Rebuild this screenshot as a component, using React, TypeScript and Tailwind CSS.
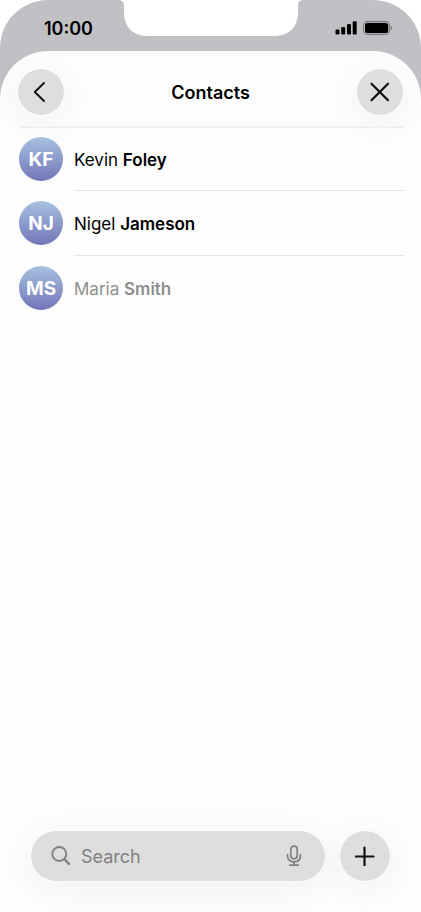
interface Contact {
  first: string;
  last: string;
  muted?: boolean;
}

const contacts: Contact[] = [
  { first: "Kevin", last: "Foley" },
  { first: "Nigel", last: "Jameson" },
  { first: "Maria", last: "Smith", muted: true },
];

const roundButton =
  "flex shrink-0 items-center justify-center rounded-full bg-[#dedede] text-[#111] ring-1 ring-white/70 shadow-[0_6px_36px_rgba(0,0,0,0.06)]";

function StatusBar() {
  return (
    <div className="grid h-[51px] grid-cols-[1fr_auto_1fr] text-black">
      <time className="pt-[17px] pl-[44px] text-[18px] leading-[24px] font-semibold">10:00</time>
      <svg width="186" height="36" viewBox="0 0 186 36" aria-hidden="true">
        <path
          d="M0 0H186C181.500 0 180 2 180 6V12C180 27 171 36 156 36H30C15 36 6 27 6 12V6C6 2 4.500 0 0 0Z"
          fill="#fff"
        />
      </svg>
      <div className="flex items-start justify-end gap-[6px] pt-[21px] pr-[28px]">
        <svg width="22" height="14" viewBox="0 0 22 14" aria-hidden="true">
          <rect x="0.500" y="8.500" width="4" height="5" rx="1.200" />
          <rect x="6.200" y="6" width="4" height="7.500" rx="1.200" />
          <rect x="12" y="3" width="4" height="10.500" rx="1.200" />
          <rect x="17.700" y="0.200" width="4" height="13.300" rx="1.200" />
        </svg>
        <svg width="30" height="14" viewBox="0 0 30 14" aria-hidden="true">
          <rect x="0.600" y="0.600" width="26" height="12.800" rx="4" fill="none" stroke="#77777b" strokeWidth="1.100" />
          <rect x="2" y="2" width="23.200" height="10" rx="2.600" />
          <path d="M28 4.800C29.800 5.500 29.800 8.500 28 9.200Z" fill="#77777b" />
        </svg>
      </div>
    </div>
  );
}

function ContactRow({ contact }: { contact: Contact }) {
  const { first, last, muted } = contact;
  return (
    <li className="group flex h-[65px] items-center gap-[11px] pb-[1px] first:h-[63px]">
      <span className="flex size-[44px] shrink-0 items-center justify-center rounded-full bg-linear-to-b from-[#a7c1df] to-[#7376b7] pt-[2px] text-[19px] leading-[24px] font-bold text-white">
        {first[0]}
        {last[0]}
      </span>
      <a
        href="#"
        className={`-mb-[1px] flex flex-1 items-center self-stretch border-b border-[#e6e6e6] pt-[1px] text-[17px] leading-[24px] group-last:border-transparent ${
          muted ? "text-[#8e8e8e]" : "text-black"
        }`}
      >
        <span>
          {first} <span className="font-semibold">{last}</span>
        </span>
      </a>
    </li>
  );
}

export default function App() {
  return (
    <div className="flex min-h-screen flex-col overflow-hidden rounded-t-[48px] bg-[#c1c0c5] font-['Inter','Liberation_Sans',sans-serif]">
      <StatusBar />
      <main className="flex flex-1 flex-col rounded-t-[48px] bg-[#fdfdfd]">
        <header className="flex items-start justify-between px-[18px] pt-[18px] pb-[11px]">
          <button type="button" aria-label="Back" className={`${roundButton} size-[46px]`}>
            <svg width="14" height="22" viewBox="0 0 14 22" className="mr-[4px]" fill="none" stroke="currentColor" strokeWidth="1.900" strokeLinecap="round" strokeLinejoin="round">
              <path d="M12 2L2.800 11L12 20" />
            </svg>
          </button>
          <h1 className="self-center pt-[1px] text-[18px] leading-[24px] font-semibold text-black">Contacts</h1>
          <button type="button" aria-label="Close" className={`${roundButton} size-[46px]`}>
            <svg width="22" height="22" viewBox="0 0 22 22" fill="none" stroke="currentColor" strokeWidth="2.200" strokeLinecap="round">
              <path d="M2.500 2.700L19 19.200M19 2.700L2.500 19.200" />
            </svg>
          </button>
        </header>
        <ul className="mr-[17px] ml-[19px] border-t-2 border-[#f0f0f0]">
          {contacts.map((contact) => (
            <ContactRow key={contact.last} contact={contact} />
          ))}
        </ul>
        <div className="mt-auto flex gap-[15px] px-[31px] pb-[31px]">
          <div className="flex h-[50px] min-w-0 flex-1 items-center rounded-full bg-[#dedede] pr-[22px] pl-[20px] text-[#818181] ring-1 ring-white/70 shadow-[0_6px_36px_rgba(0,0,0,0.06)]">
            <svg width="20" height="20" viewBox="0 0 20 20" aria-hidden="true" fill="none" stroke="currentColor" strokeLinecap="round">
              <circle cx="8.300" cy="8" r="7" strokeWidth="1.900" />
              <path d="M13.400 13.200L18 17.800" strokeWidth="2.500" />
            </svg>
            <input
              type="search"
              aria-label="Search contacts"
              placeholder="Search"
              className="ml-[10px] min-w-0 flex-1 bg-transparent pt-[1px] text-[18px] leading-[24px] outline-none placeholder:text-[#818181]"
            />
            <button type="button" aria-label="Dictate">
              <svg width="18" height="22" viewBox="0 0 18 22" fill="none" stroke="currentColor" strokeWidth="1.700" strokeLinecap="round">
                <rect x="5.800" y="1.200" width="6.400" height="12.600" rx="3.200" />
                <path d="M2.600 9.500V10.800C2.600 14.700 5.200 16.800 9 16.800S15.400 14.700 15.400 10.800V9.500M9 16.800V20.200M4.700 20.200H13.300" />
              </svg>
            </button>
          </div>
          <button type="button" aria-label="Add contact" className={`${roundButton} size-[50px]`}>
            <svg width="20" height="20" viewBox="0 0 20 20" fill="none" stroke="currentColor" strokeWidth="2.200" strokeLinecap="round">
              <path d="M9.500 1.700V19.300M0.900 10.500H18.500" />
            </svg>
          </button>
        </div>
      </main>
    </div>
  );
}
